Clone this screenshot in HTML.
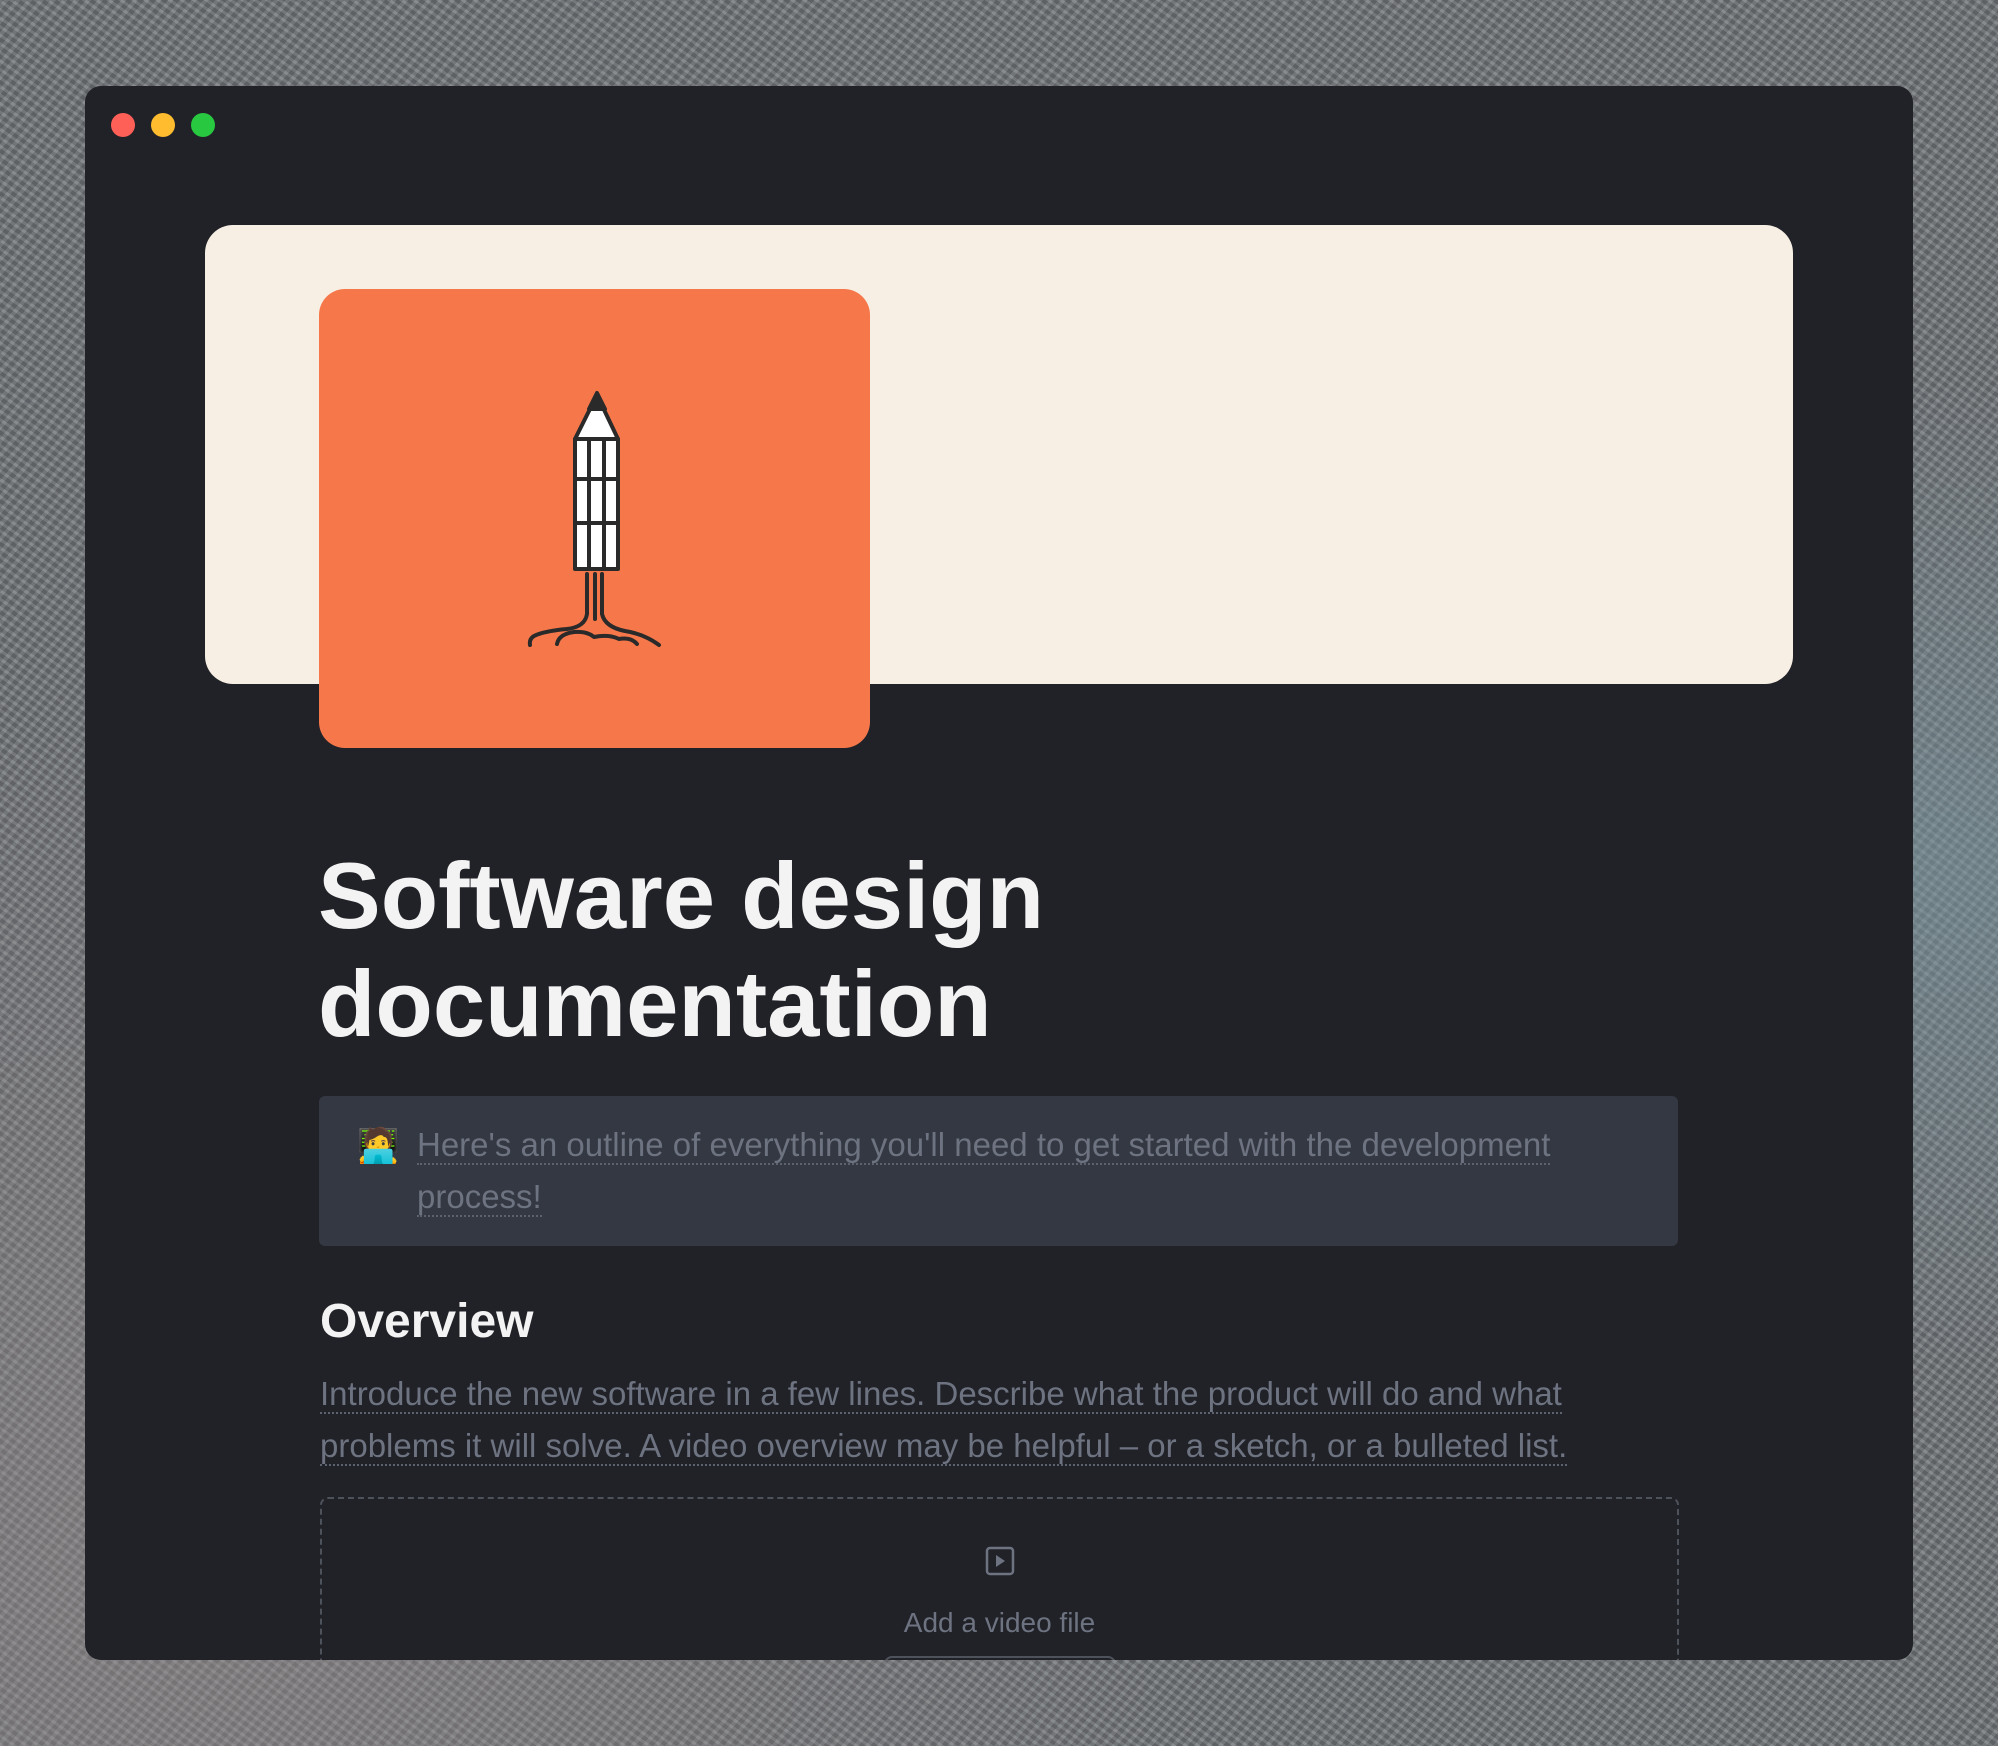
<!DOCTYPE html>
<html><head><meta charset="utf-8">
<style>
html,body{margin:0;padding:0;}
body{width:1998px;height:1746px;position:relative;overflow:hidden;
background:
radial-gradient(ellipse at 95% 50%, rgba(120,150,160,.55), transparent 40%),
radial-gradient(ellipse at 10% 90%, rgba(150,140,140,.5), transparent 40%),
repeating-linear-gradient(35deg, rgba(255,255,255,.08) 0 3px, rgba(0,0,0,.1) 3px 7px),
repeating-linear-gradient(-50deg, rgba(255,255,255,.06) 0 4px, rgba(0,0,0,.12) 4px 9px),
#767a7e;
font-family:"Liberation Sans",sans-serif;}
.win{position:absolute;left:85px;top:86px;width:1828px;height:1574px;background:#212228;border-radius:16px;overflow:hidden;}
.dot{position:absolute;top:27px;width:24px;height:24px;border-radius:50%;}
.cover{position:absolute;left:120px;top:139px;width:1588px;height:459px;background:#f7efe4;border-radius:28px;}
.card{position:absolute;left:234px;top:203px;width:551px;height:459px;background:#f6784a;border-radius:26px;}
.title{position:absolute;left:233px;top:756px;color:#f3f3f3;font-weight:bold;font-size:94px;line-height:108px;letter-spacing:0px;margin:0;}
.callout{position:absolute;left:234px;top:1010px;width:1359px;height:150px;background:#343842;border-radius:6px;}
.ct{position:absolute;left:98px;top:23px;font-size:33px;line-height:52px;color:#6d7380;white-space:nowrap;}
.u{border-bottom:2px dotted #5d636e;}
.h2{position:absolute;left:235px;top:1208px;color:#f3f3f3;font-weight:bold;font-size:48px;margin:0;}
.p{position:absolute;left:235px;top:1282px;font-size:33px;line-height:52px;color:#6d7380;white-space:nowrap;}
.dash{position:absolute;left:235px;top:1411px;width:1355px;height:300px;border:2px dashed #4e525b;border-radius:8px;}
</style></head><body>
<div class="win">
<div class="dot" style="left:26px;background:#fe5f57"></div>
<div class="dot" style="left:66px;background:#febc2e"></div>
<div class="dot" style="left:106px;background:#28c840"></div>
<div class="cover"></div>
<div class="card">
<svg width="551" height="459" viewBox="0 0 551 459" fill="none" stroke="#2a2a2a" stroke-width="4" stroke-linecap="round" stroke-linejoin="round">
<rect x="256" y="150" width="43" height="130" fill="#fff"/>
<path d="M256 150 L278 106 L299 150 Z" fill="#fff"/>
<path d="M270 120 L278 104 L286 120 Z" fill="#2a2a2a"/>
<path d="M270 150 V280 M285 150 V280 M256 190 H299 M256 234 H299"/>
<path d="M268 285 V325 Q266 338 248 340 Q225 342 215 347 Q210 350 211 356"/>
<path d="M276 285 V330 M283 285 V325 Q286 338 306 342 Q325 345 340 356"/>
<path d="M238 355 Q240 345 255 343 Q268 342 275 348 Q290 345 300 350 Q312 348 318 355"/>
</svg>
</div>
<h1 class="title">Software design<br>documentation</h1>
<div class="callout">
<div style="position:absolute;left:38px;top:30px;font-size:34px;font-family:'Noto Color Emoji','DejaVu Sans',sans-serif;">🧑‍💻</div>
<div class="ct"><span class="u">Here's an outline of everything you'll need to get started with the development</span><br><span class="u">process!</span></div>
</div>
<h2 class="h2">Overview</h2>
<div class="p"><span class="u">Introduce the new software in a few lines. Describe what the product will do and what</span><br><span class="u">problems it will solve. A video overview may be helpful – or a sketch, or a bulleted list.</span></div>
<div class="dash">
<svg style="position:absolute;left:662px;top:46px" width="32" height="32" viewBox="0 0 32 32" fill="none" stroke="#6d7380" stroke-width="2.5"><rect x="3" y="3" width="26" height="26" rx="3"/><path d="M12 10 L21 16 L12 22 Z" fill="#6d7380" stroke="none"/></svg>
<div style="position:absolute;left:0;width:100%;top:108px;text-align:center;font-size:28px;color:#6d7380;">Add a video file</div>
<div style="position:absolute;left:562px;top:157px;width:228px;height:40px;border:2px solid #4e525b;border-radius:8px;"></div>
</div>
</div>
</body></html>
